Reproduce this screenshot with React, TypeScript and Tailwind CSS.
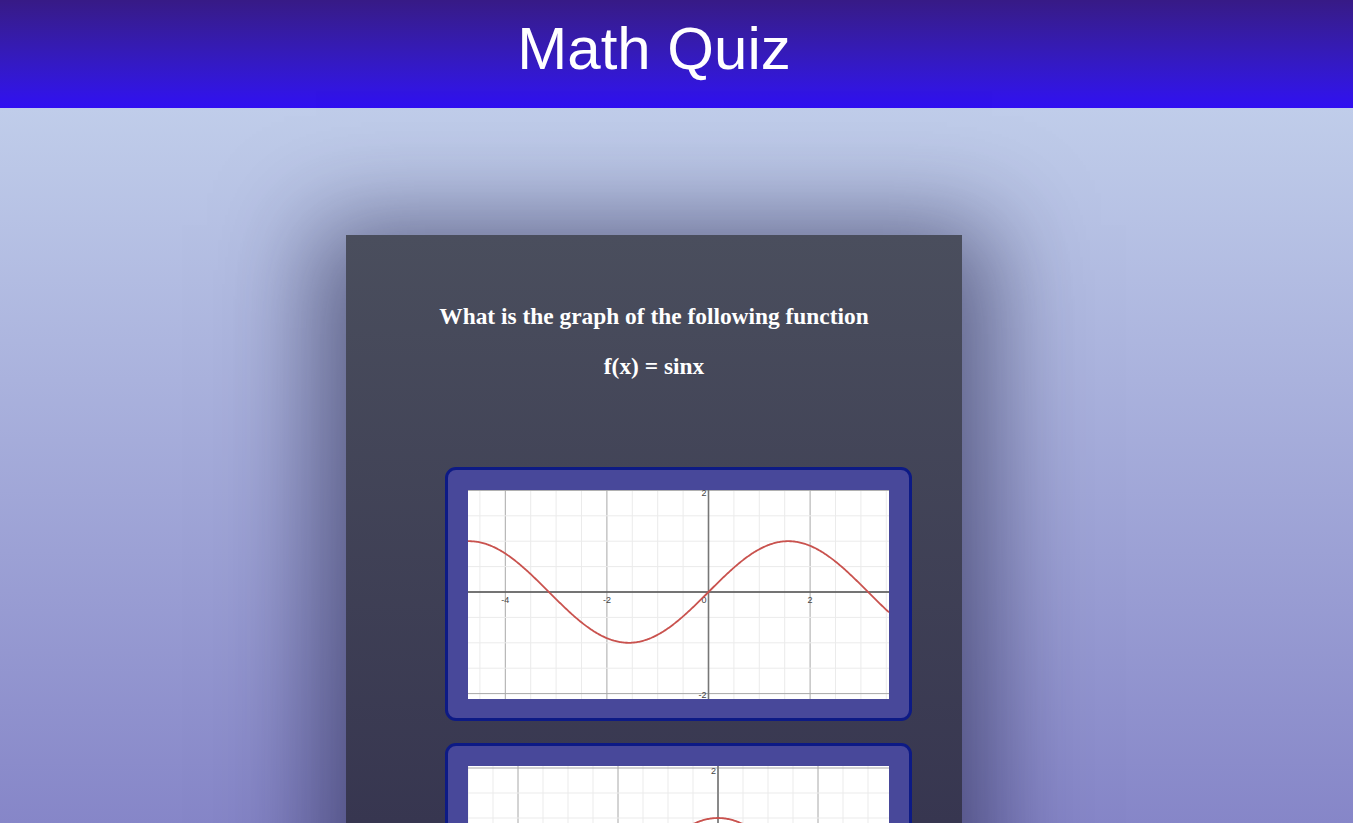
import React from "react";

type GraphProps = {
	fn: (x: number) => number;
	originX: number;
	originY: number;
	scale: number;
};

const W = 421;
const H = 209;

const Graph = ({ fn, originX, originY, scale }: GraphProps) => {
	const toPx = (x: number) => originX + x * scale;
	const toPy = (y: number) => originY - y * scale;
	const minX = -originX / scale;
	const maxX = (W - originX) / scale;
	const minY = -(H - originY) / scale;
	const maxY = originY / scale;

	const vLines: { v: number; major: boolean }[] = [];
	for (let v = Math.ceil(minX * 2) / 2; v <= maxX; v += 0.5) {
		vLines.push({ v, major: Math.abs(v % 2) < 0.001 });
	}
	const hLines: { v: number; major: boolean }[] = [];
	for (let v = Math.ceil(minY * 2) / 2; v <= maxY + 0.05; v += 0.5) {
		hLines.push({ v, major: Math.abs(v % 2) < 0.001 });
	}

	let d = "";
	for (let px = 0; px <= W; px += 1) {
		const x = (px - originX) / scale;
		const py = toPy(fn(x));
		d += `${px === 0 ? "M" : "L"}${px},${py.toFixed(2)} `;
	}

	const xLabels = vLines.filter((l) => l.major && Math.abs(l.v) > 0.01);

	return (
		<svg width={W} height={H} viewBox={`0 0 ${W} ${H}`} className="block bg-white">
			{vLines.map((l) => (
				<line
					key={`v${l.v}`}
					x1={toPx(l.v)}
					x2={toPx(l.v)}
					y1={0}
					y2={H}
					stroke={l.major ? "#a8a8a8" : "#ebebeb"}
					strokeWidth={1}
				/>
			))}
			{hLines.map((l) => (
				<line
					key={`h${l.v}`}
					y1={toPy(l.v)}
					y2={toPy(l.v)}
					x1={0}
					x2={W}
					stroke={l.major ? "#a8a8a8" : "#ebebeb"}
					strokeWidth={1}
				/>
			))}
			<line x1={0} x2={W} y1={originY} y2={originY} stroke="#555" strokeWidth={1.3} />
			<line x1={originX} x2={originX} y1={0} y2={H} stroke="#777" strokeWidth={1.6} />
			<g fontFamily="'Liberation Sans', Arial, sans-serif" fontSize={9} fill="#444">
				{xLabels.map((l) => (
					<text key={`xl${l.v}`} x={toPx(l.v)} y={originY + 11} textAnchor="middle">
						{l.v}
					</text>
				))}
				<text x={originX - 2} y={originY + 11} textAnchor="end">
					0
				</text>
				<text x={originX - 2} y={toPy(2) + 6} textAnchor="end">
					2
				</text>
				<text x={originX - 2} y={toPy(-2) + 4} textAnchor="end">
					-2
				</text>
			</g>
			<path d={d} fill="none" stroke="#c9524e" strokeWidth={1.8} />
		</svg>
	);
};

const options: GraphProps[] = [
	{ fn: Math.sin, originX: 240.5, originY: 102, scale: 50.8 },
	{ fn: Math.cos, originX: 250, originY: 102, scale: 50 },
	{ fn: (x) => Math.sin(2 * x), originX: 240.5, originY: 102, scale: 50.8 },
	{ fn: (x) => -Math.sin(x), originX: 240.5, originY: 102, scale: 50.8 },
];

const App = () => {
	return (
		<div className="min-h-screen w-full bg-[linear-gradient(to_bottom,#c0cdea_108px,#8686c8_100%)] bg-fixed">
			<header className="flex h-[108px] w-full items-center justify-center bg-gradient-to-b from-[#371a86] to-[#300ff2] pr-[45px] pb-[11px]">
				<h1 className="font-['Liberation_Sans',Arial,sans-serif] text-[60px] leading-none font-normal text-white">
					Math Quiz
				</h1>
			</header>

			<main className="flex justify-center pt-[127px] pr-[45px] pb-20">
				<section className="w-[616px] bg-[linear-gradient(to_bottom,#4a4e5d,#373650_588px,#302e49)] pt-[69px] pb-10 shadow-[0_20px_90px_30px_rgba(25,25,60,0.55)]">
					<div className="flex flex-col items-center gap-[25px] font-['Liberation_Serif','Times_New_Roman',serif] text-[23.4px] font-bold text-white">
						<h2 className="leading-[25px]">What is the graph of the following function</h2>
						<h2 className="leading-[25px]">f(x) = sinx</h2>
					</div>

					<div className="mt-[88px] flex flex-col gap-[22px] pl-[99px]">
						{options.map((opt, i) => (
							<button
								key={i}
								type="button"
								className="w-[467px] rounded-[11px] border-[3px] border-[#0d1a85] bg-[#48489a] p-5 pb-[19px]"
							>
								<Graph {...opt} />
							</button>
						))}
					</div>
				</section>
			</main>
		</div>
	);
};

export default App;
